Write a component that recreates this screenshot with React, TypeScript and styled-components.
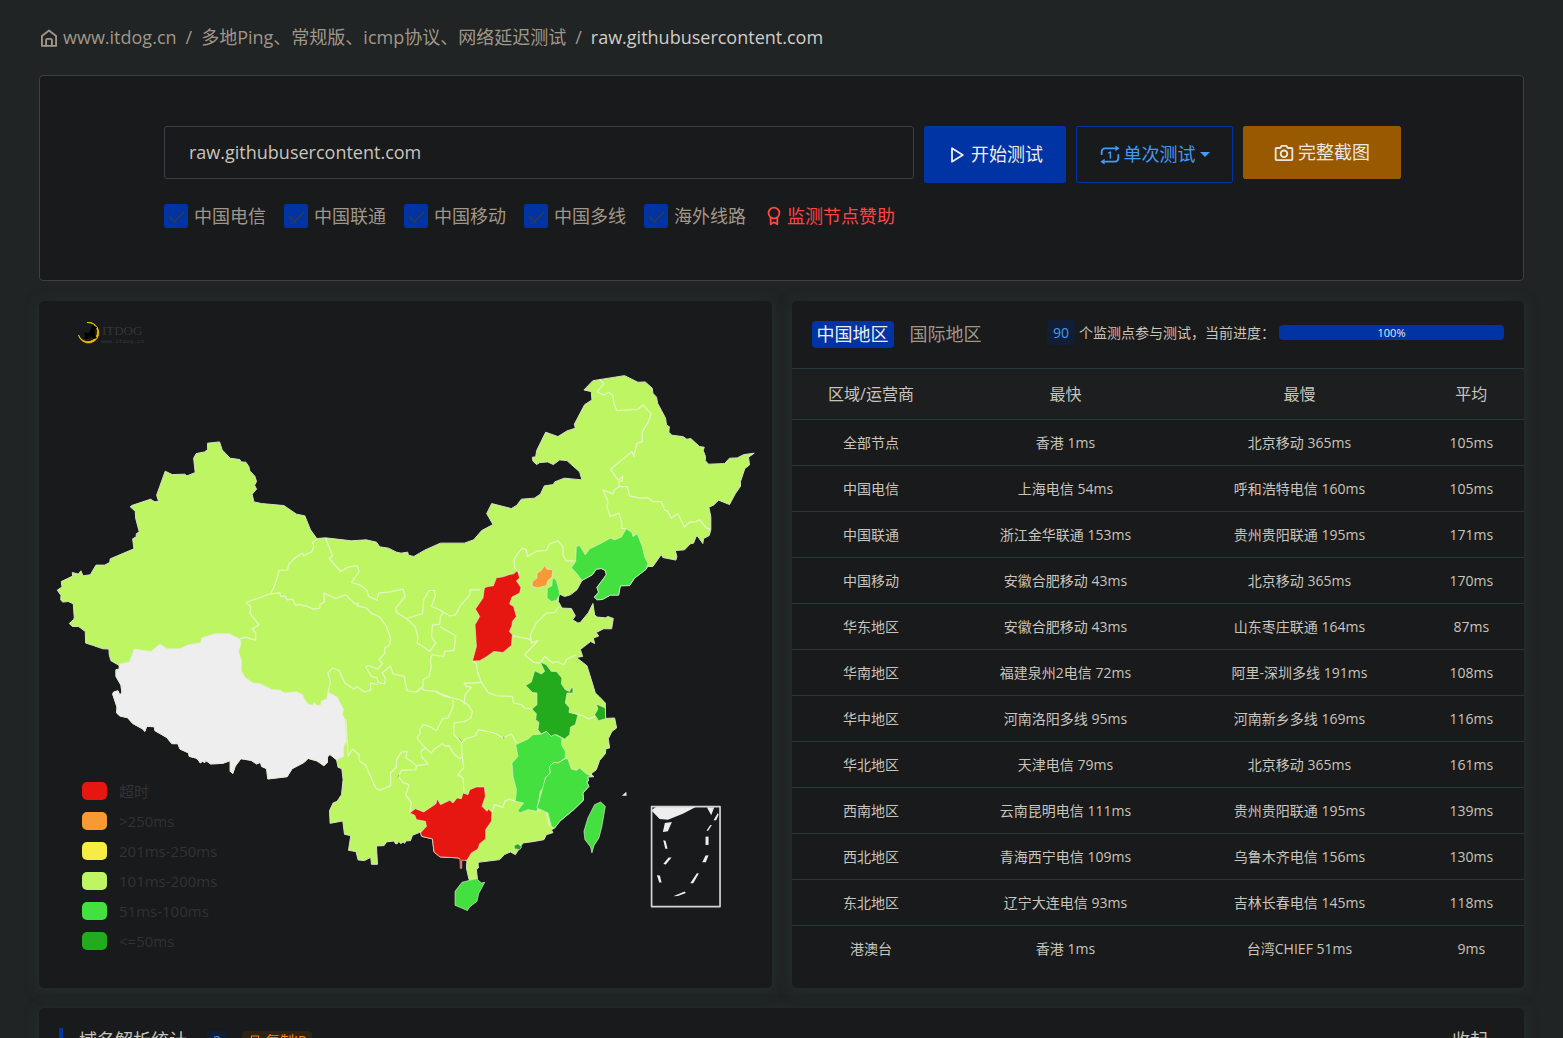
import React from 'react';
import styled, { createGlobalStyle, css } from 'styled-components';

const sans = `"Open Sans", "Noto Sans CJK SC", sans-serif`;

const c = {
  page: '#202424',
  card: '#191a1b',
  line: '#3b4043',
  rule: '#283640',
  text: '#c9c4bc',
  muted: '#a0978a',
  blue: '#0033a3',
  sky: '#429bf5',
  amber: '#985900',
  red: '#ff4545',
};

const level = {
  timeout: '#e61610',
  slow: '#f79a36',
  medium: '#f6ec45',
  fair: '#bef663',
  good: '#43e040',
  best: '#23aa1d',
  none: '#eeeeee',
};

const Global = createGlobalStyle`
  * { box-sizing: border-box; }
  body { margin: 0; background: ${c.page}; color: ${c.text}; font-family: ${sans}; font-size: 14px; overflow: hidden; }
  button, input { font-family: inherit; }
`;

const Page = styled.div`
  height: 100vh;
  padding: 0 39px;
  overflow: hidden;
`;

const Crumbs = styled.nav`
  display: flex;
  align-items: center;
  gap: 9px;
  height: 75px;
  font-size: 18px;
  line-height: 27px;
  color: ${c.muted};
`;

const CrumbLink = styled.a`
  display: inline-flex;
  align-items: center;
  gap: 4px;
  color: inherit;
  text-decoration: none;
`;

const CurrentCrumb = styled.span`
  color: #d1cdc7;
`;

const Icon = styled.svg<{ $size?: number }>`
  flex: none;
  width: ${(p) => p.$size ?? 20}px;
  height: ${(p) => p.$size ?? 20}px;
  fill: none;
  stroke: currentColor;
  stroke-width: 2.2;
  stroke-linejoin: round;
  stroke-linecap: round;
`;

const SearchCard = styled.section`
  height: 206px;
  padding: 50px 122px 0 124px;
  border: 1px solid ${c.line};
  border-radius: 4px;
  background: ${c.card};
`;

const SearchRow = styled.form`
  display: flex;
  align-items: flex-start;
  gap: 10px;
`;

const HostInput = styled.input`
  flex: 1;
  min-width: 0;
  height: 53px;
  padding: 0 24px 2px;
  border: 1px solid ${c.line};
  border-radius: 3px;
  background: transparent;
  color: ${c.text};
  font-size: 18px;
  outline: none;
`;

const Action = styled.button<{ $kind: 'solid' | 'outline' | 'amber' }>`
  display: flex;
  align-items: center;
  justify-content: center;
  gap: 4px;
  height: 57px;
  padding: 0;
  border: 1px solid ${c.blue};
  border-radius: 2px;
  font-size: 18px;
  line-height: 27px;
  white-space: nowrap;
  ${(p) =>
    p.$kind === 'solid'
      ? css`width: 142px; background: ${c.blue}; color: #f0ece6;`
      : p.$kind === 'outline'
        ? css`width: 157px; background: transparent; color: ${c.sky};`
        : css`width: 158px; height: 53px; border-color: ${c.amber}; background: ${c.amber}; color: #e8e6e3;`}
`;

const Caret = styled.span`
  border: 5px solid transparent;
  border-top-color: currentColor;
  border-bottom-width: 0;
`;

const LineRow = styled.div`
  display: flex;
  align-items: center;
  gap: 18px;
  margin-top: 20px;
  font-size: 18px;
  line-height: 26px;
  color: ${c.muted};
`;

const LineLabel = styled.label`
  display: flex;
  align-items: center;
  gap: 6px;
`;

const Tick = styled.input`
  appearance: none;
  width: 24px;
  height: 24px;
  margin: 0;
  border-radius: 2px;
  background: ${c.blue};
  display: grid;
  place-items: center;
  &:checked::before {
    content: '';
    width: 7px;
    height: 13px;
    margin-bottom: 4px;
    border: solid #2b3a55;
    border-width: 0 2px 2px 0;
    transform: rotate(43deg);
  }
`;

const SponsorLink = styled.a`
  display: flex;
  align-items: center;
  gap: 3px;
  color: ${c.red};
  text-decoration: none;
`;

const Columns = styled.div`
  display: grid;
  grid-template-columns: 1fr 1fr;
  gap: 20px;
  margin: 20px 0;
`;

const Panel = styled.section`
  position: relative;
  border-radius: 5px;
  background: ${c.card};
  box-shadow: 0 2px 14px rgba(42, 56, 54, 0.6);
`;

const MapSvg = styled.svg`
  display: block;
  width: 100%;
  height: auto;
  stroke-linejoin: round;
`;

const Legend = styled.ul`
  position: absolute;
  left: 43px;
  bottom: 32px;
  margin: 0;
  padding: 0;
  list-style: none;
  color: #313334;
  font-size: 15px;
  line-height: 30px;
`;

const LegendItem = styled.li`
  display: flex;
  align-items: center;
  gap: 12px;
`;

const Swatch = styled.span<{ $color: string }>`
  width: 25px;
  height: 18px;
  border-radius: 5px;
  background: ${(p) => p.$color};
`;

const ResultHead = styled.header`
  display: flex;
  align-items: flex-start;
  height: 67px;
  padding: 18px 20px 0;
`;

const Tab = styled.button<{ $active?: boolean }>`
  height: 27px;
  margin: 2px 11px 0 0;
  padding: 0 5px;
  border: 0;
  border-radius: 4px;
  background: ${(p) => (p.$active ? c.blue : 'transparent')};
  color: ${(p) => (p.$active ? '#f0ece6' : c.muted)};
  font-size: 18px;
  line-height: 27px;
`;

const Progress = styled.div`
  display: flex;
  align-items: center;
  gap: 4px;
  height: 26px;
  margin-left: auto;
  white-space: nowrap;
`;

const Count = styled.span`
  padding: 0 6px;
  border-radius: 4px;
  background: #121e35;
  color: ${c.sky};
  font-size: 14px;
  line-height: 25px;
`;

const Bar = styled.div`
  width: 225px;
  height: 15px;
  border-radius: 4px;
  background: ${c.blue};
  color: #f0ece6;
  font-size: 11px;
  line-height: 15px;
  text-align: center;
`;

const Results = styled.table`
  width: 100%;
  table-layout: fixed;
  border-collapse: collapse;
  text-align: center;
  th {
    height: 51px;
    padding: 0 0 2px;
    border-top: 1px solid ${c.rule};
    background: #1c1e1f;
    font-size: 16px;
    font-weight: 400;
  }
  td {
    height: 46px;
    padding: 0;
    border-top: 1px solid ${c.rule};
    line-height: 20px;
    white-space: nowrap;
  }
`;

const Col = styled.col<{ $width: string }>`
  width: ${(p) => p.$width};
`;

const DnsPanel = styled(Panel)`
  display: flex;
  align-items: flex-start;
  height: 120px;
  padding: 20px;
`;

const DnsTitle = styled.h2`
  margin: 0 20px 0 0;
  padding-left: 16px;
  border-left: 4px solid ${c.blue};
  font-size: 18px;
  font-weight: 400;
  line-height: 24px;
`;

const DnsBadge = styled.span`
  margin: 3px 15px 0 0;
  padding: 0 6px;
  border-radius: 4px;
  background: #121e35;
  color: ${c.sky};
  line-height: 20px;
`;

const CopyButton = styled.button`
  display: flex;
  align-items: center;
  gap: 6px;
  height: 20px;
  margin-top: 3px;
  padding: 0 6px;
  border: 0;
  border-radius: 4px;
  background: #2e2315;
  color: #f08c14;
  font-size: 14px;
  line-height: 20px;
`;

const FoldButton = styled.button`
  display: flex;
  align-items: center;
  gap: 4px;
  margin: 0 4px 0 auto;
  padding: 0;
  border: 0;
  background: none;
  color: ${c.text};
  font-size: 18px;
  line-height: 24px;
`;

/* The map is digitised in tiles, three units to one map unit. */
type Point = [number, number];
const tile = (ox: number, oy: number) => (s: string): Point[] =>
  s.trim().split(/\s+/).map((p) => {
    const [x, y] = p.split(',').map(Number);
    return [ox + x / 3, oy + y / 3];
  });
const nw = tile(1, -1);
const ne = tile(361, 59);
const sw = tile(1, 319);
const se = tile(361, 339);
const mid = tile(201, 229);
const south = tile(281, 379);
const path = (pts: Point[]) => 'M' + pts.map(([x, y]) => `${x.toFixed(1)} ${y.toFixed(1)}`).join('L');

const tibetSouth = sw(`870,404 863,412 863,428 852,438 832,424 805,416 793,428 757,447 742,471 684,478 680,447 665,440 662,428 650,433 634,422 603,417 586,440 579,461 571,455 571,423 548,431 512,433 497,422 494,430 489,424 481,430 475,420 467,415 448,410 446,400 420,388 414,372 396,372 380,353 345,333 343,321 320,320 315,335 307,327 278,311 263,294 240,289 230,280 231,262 218,223 221,217 234,213 239,225 246,220 243,196 228,170 228,150 238,148 238,137`);
const tibet = [
  ...sw(`238,133 268,127 283,88 333,95 360,73 382,87 420,87 445,75 482,69 485,55 525,42 567,41 600,58 604,72 596,95 605,125 604,152 616,173 640,190 660,191 695,209 720,211 735,220 770,216 788,225 795,240 808,255 820,256 822,247 832,258 843,255 845,243 861,238 864,217 892,232 912,270 908,283 915,298 920,365 912,380 912,410 890,420`),
  ...tibetSouth,
];

const liaoningCoast = `740,628 705,655 690,677 662,678 657,706 632,706 608,719 592,720 584,712 597,697 592,683 620,645 617,632 605,626 590,628 578,645 547,662`;

const mainland = [
  ...nw(`52,871 66,862 64,845 98,829 97,818 115,823 123,813 129,828 151,825 168,796 194,796 209,788 211,777 282,747 278,717 289,711 289,702 298,696 287,655 286,634 271,621 275,617 332,598 343,605 356,605 350,586 376,514 397,524 435,523 441,528 466,518 461,475 469,461 494,456 503,449 503,430 539,426 547,450 571,475 600,479 604,486 618,487 627,500 630,513 645,529 650,545 644,556 650,568 637,583 642,606 665,611 732,617 770,643 795,648 812,690 831,716 857,714 935,723 979,720 1010,727 1020,741 1046,745 1070,757 1084,760 1104,757 1106,766`),
  ...ne(`42,590 75,571 122,550 194,550 222,540 246,512 280,494 261,461 276,431 335,446 352,436 365,418 404,415 422,403 434,378 461,374 465,366 494,355 516,357 547,360 540,336 502,302 480,300 461,314 444,306 420,308 411,314 400,304 398,292 408,291 411,272 438,217 475,230 502,213 527,205 524,193 555,134 577,120 575,95 553,90 580,62 675,47 715,67 737,66 758,85 760,100 771,112 774,130 786,152 798,175 801,196 809,200 808,217 817,226 850,230 862,238 874,236 900,260 914,262 911,272 918,290 917,302 927,313 975,311 990,295 1013,294 1033,284 1064,280 1047,292 1050,315 1036,326 1023,365 1023,379 1007,402 990,434 957,421 942,436 928,442 934,470 934,510 929,527 912,536 910,551 893,528 889,532 882,550 872,552 855,570 827,572 832,590 829,601 790,593 785,584 760,620 744,620 ${liaoningCoast} 532,690 512,705 495,710 478,702 476,725 487,745 515,746 527,768 519,780 535,790 542,788 566,759 580,731 585,765 592,772 618,774 625,770 641,776 636,807 612,807 590,818 597,829 581,835 585,851 573,845 542,869 549,890 530,893 562,918 575,960 587,1000`),
  ...se(`600,172 617,190 618,236 645,235 651,265 637,275 626,297 630,325 619,327 617,342 600,362 590,390 574,403 583,411 564,412 567,423 561,426 568,440 550,460 551,482 520,512 480,545 464,566 455,570 460,579 440,585 433,600 400,606 370,610 347,645 332,637 314,645 300,660 235,668 236,685 230,690 233,718 208,720 200,685 202,662 175,655 145,653 121,652 103,637 98,598 66,590 62,580`),
  ...south(`300,458 278,467 272,483 258,484 255,491 250,487 243,492 237,485 232,493 226,491 224,484 200,487 193,498 170,499 173,554 155,554 153,533 134,543 115,541 109,516 86,512 93,468 74,464 69,424 31,431 29,393 40,370 52,365 65,345 70,300 66,267 55,263 50,240`),
  ...tibetSouth,
  ...sw(`213,123 208,106 207,88 188,87 160,77 137,70 136,35 120,23 115,20 97,20 88,11`),
  ...nw(`100,960 103,955 100,912 85,905 68,907 62,900 63,887`),
];

const provinces: { name: string; color: string; pts: Point[] }[] = [
  { name: 'tibet', color: level.none, pts: tibet },
  { name: 'shanxi', color: level.timeout, pts: ne(`353,632 342,642 330,644 310,651 290,654 281,678 265,680 254,684 250,715 227,748 240,770 226,795 230,860 218,904 240,903 262,890 282,875 310,878 335,857 338,825 329,815 337,798 338,785 350,770 342,740 330,733 337,712 360,700 364,683 350,663 360,655`) },
  { name: 'liaoning', color: level.good, pts: ne(`515,624 528,605 530,560 540,557 557,585 570,567 605,550 632,535 645,540 665,532 680,507 697,518 700,530 713,522 728,560 735,590 745,610 ${liaoningCoast} 530,640`) },
  { name: 'beijing', color: level.slow, pts: ne(`397,680 398,665 412,655 412,640 425,632 435,617 442,628 460,630 457,652 445,662 440,678 415,684`) },
  { name: 'tianjin', color: level.good, pts: ne(`442,715 443,685 457,678 458,658 463,655 470,662 478,690 480,705 470,722 455,725`) },
  { name: 'anhui', color: level.best, pts: se(`422,67 440,75 455,95 470,95 487,115 485,132 497,150 510,155 514,145 520,145 520,160 502,160 497,190 510,205 508,218 535,225 527,255 513,262 510,285 495,298 470,285 455,290 440,275 425,283 415,270 418,248 408,240 410,222 397,208 412,195 412,160 398,158 378,137 395,127 405,93 425,103 435,95`) },
  { name: 'jiangxi', color: level.good, pts: se(`440,275 455,290 465,284 487,295 485,315 497,335 497,355 475,370 463,368 450,380 452,400 437,415 435,440 422,455 412,515 385,510 360,520 355,512 372,490 347,485 350,450 340,410 337,370 355,350 348,315 385,298 400,285 425,283`) },
  { name: 'fujian', color: level.good, pts: se(`505,358 515,388 530,392 540,385 560,402 577,410 564,412 567,423 561,426 568,440 550,460 551,482 520,512 480,545 464,566 455,560 445,520 412,505 425,460 437,415 452,400 450,380 463,368 475,370 497,357`) },
  { name: 'shanghai', color: level.best, pts: se(`590,193 617,205 618,237 597,243 585,225 595,208`) },
  { name: 'guangxi', color: level.timeout, pts: se(`30,520 47,507 72,517 108,493 113,478 122,495 150,482 160,490 172,475 185,477 190,460 205,465 210,450 230,442 254,442 257,470 247,500 262,515 266,508 277,518 275,545 258,570 258,598 240,612 235,628 215,640 202,662 186,662 186,686 182,686 181,658 175,655 145,653 121,652 103,637 98,598 66,590 62,580 80,560 77,545 50,540 45,527`) },
  { name: 'hongkong', color: level.best, pts: se(`343,618 355,612 366,622 360,630 345,628`) },
  { name: 'hainan', color: level.good, pts: se(`166,755 187,728 230,717 245,730 255,728 237,762 232,785 210,802 203,813 166,797`) },
  { name: 'taiwan', color: level.good, pts: se(`585,495 603,487 617,500 607,560 598,595 583,618 577,640 573,622 556,600 553,575 565,535`) },
];

const borders: Point[][] = [
  mid(`232,28 218,37 222,50 216,66 192,78 188,70 165,85 147,103 143,120 118,122 107,160 93,192 18,218 33,230 30,250 57,285 37,298 48,310 47,331 15,322 0,328`),
  mid(`93,192 120,189 123,200 135,199 142,210 158,208 167,226 178,224 200,229 222,238 240,235 240,224 254,216 252,190 287,206 318,195 345,222 356,220 352,228 378,234 395,250 420,262 440,290 452,325 450,345 435,355 435,370 418,390 428,402 414,418 385,407 378,412 395,440 412,445 415,458 434,463 437,445 427,430 452,409 460,432 493,440 502,483 530,487 545,475 555,482 590,485 615,500 635,505`),
  mid(`265,488 272,455 264,430 278,415 298,422 315,460 343,478 350,470 375,487 393,482 392,460 414,465`),
  mid(`258,26 278,78 268,86 303,125 325,112 352,107 358,125 335,158 360,165 380,180 387,200 412,211 416,190 450,186 490,178 496,200 468,235 470,248 500,266 548,252 552,210 568,182 584,182 587,198 575,230 600,240 612,248 630,258 648,255 660,230 690,195 692,180 720,180`),
  mid(`500,266 527,292 535,325 532,340 552,352 570,365 588,340 575,320 578,285 600,283 602,260 612,248`),
  mid(`600,290 648,318 643,362 615,365 612,380 575,375 572,395 575,410 568,440 550,450 550,470 530,487`),
  [...ne(`218,904 230,912 233,935 245,968 265,998 290,1008`), ...se(`338,170 342,190 365,195 375,205 397,208`)],
  se(`245,128 220,130 193,130 200,140 215,142 196,165 193,195`),
  se(`110,158 150,172 180,180 205,195 218,215 213,235 195,245 163,250 162,285 185,308 187,345 192,385 175,405 190,415 193,455`),
  south(`400,60 400,80 385,115 368,117 350,153 330,140 310,135 300,150 302,160 292,175 310,198 322,210 335,220 345,207 368,192 378,200 388,197 402,222 420,237 427,232`),
  south(`320,205 305,212 305,230 325,253 290,258 288,270 245,272 236,290 250,308 268,315 258,345 275,370 270,400`),
  south(`78,118 85,230 98,208 118,225 120,245 137,255 150,285 168,325 180,332 213,318 212,280 230,262 230,240 245,217 262,215 258,235 275,245 288,258`),
  south(`427,190 435,178 468,168 475,150 525,160 550,175 575,163 590,190`),
  south(`518,395 525,375 550,383 555,365 568,358 588,365`),
  south(`650,395 665,387 680,395 690,440`),
  ne(`360,640 345,625 343,600 355,580 368,565 380,570 383,590 415,573 440,572 450,552 475,543 490,560 490,585 500,603 525,603`),
  ne(`338,828 390,838 400,850`),
  ne(`478,740 465,758 440,760 410,790 392,825 395,850 415,842 375,885 403,908 422,910 435,890 460,910 470,905 493,915 500,900 528,885`),
  se(`527,222 550,228 568,238 590,228`),
  ne(`600,58 613,72 592,95 612,105 628,97 640,107 643,130 652,152 715,148 730,135 755,162 745,188 728,215 728,245 712,250 703,290 697,275 633,328 655,360 670,350 668,362 658,365 658,380 645,390 640,402 610,390 625,425 622,440 632,470 658,460 667,490 665,505 680,507`),
  ne(`658,380 683,380 690,408 720,415 745,413 760,425 785,425 795,450 805,455 815,475 835,462 855,502 870,487 890,485 900,480 920,505 932,508`),
];

const islets = [
  se('755,512 770,501 890,501 850,522 805,540 780,538'),
  se('922,503 944,503 935,527'),
  se('942,542 955,520 957,525 950,542'),
  se('790,577 796,550 817,547 805,575'),
  se('921,573 932,556 937,556 926,573'),
  se('918,591 927,591 927,616 918,616'),
  se('908,668 918,648 927,647 919,668'),
  se('872,731 892,701 898,702 881,731'),
  se('821,770 855,756 859,760 835,769'),
  se('791,602 798,603 804,627 797,627'),
  se('791,673 807,654 816,654 799,675'),
  se('772,707 781,708 786,729 779,729'),
  se('667,468 680,456 681,468'),
];

const legend = [
  ['超时', level.timeout],
  ['>250ms', level.slow],
  ['201ms-250ms', level.medium],
  ['101ms-200ms', level.fair],
  ['51ms-100ms', level.good],
  ['<=50ms', level.best],
];

const rows = [
  ['全部节点', '香港 1ms', '北京移动 365ms', '105ms'],
  ['中国电信', '上海电信 54ms', '呼和浩特电信 160ms', '105ms'],
  ['中国联通', '浙江金华联通 153ms', '贵州贵阳联通 195ms', '171ms'],
  ['中国移动', '安徽合肥移动 43ms', '北京移动 365ms', '170ms'],
  ['华东地区', '安徽合肥移动 43ms', '山东枣庄联通 164ms', '87ms'],
  ['华南地区', '福建泉州2电信 72ms', '阿里-深圳多线 191ms', '108ms'],
  ['华中地区', '河南洛阳多线 95ms', '河南新乡多线 169ms', '116ms'],
  ['华北地区', '天津电信 79ms', '北京移动 365ms', '161ms'],
  ['西南地区', '云南昆明电信 111ms', '贵州贵阳联通 195ms', '139ms'],
  ['西北地区', '青海西宁电信 109ms', '乌鲁木齐电信 156ms', '130ms'],
  ['东北地区', '辽宁大连电信 93ms', '吉林长春电信 145ms', '118ms'],
  ['港澳台', '香港 1ms', '台湾CHIEF 51ms', '9ms'],
];

function ChinaMap() {
  return (
    <MapSvg viewBox="0 0 733 687" role="img" aria-label="中国地区延迟地图">
      <path d="M48 21.500A10.300 10.300 0 1 1 39.500 34A9.800 9.800 0 0 0 58.500 29.500A10 10 0 0 0 48 21.500Z" fill="#f5c400" stroke="#f5c400" strokeWidth="0.800" />
      <path d="M45 31.500l5 .5 3-7 1-2 1.500 2 2.500 1-1 2-1.500 1 .5 5 2 3-3 1-2-2-4 1-1 1h-3l1-3z" fill="#000" />
      <text x="63" y="34" fontSize="13" fontFamily="Liberation Serif, serif" fill="#34373a">ITDOG</text>
      <text x="62" y="42" fontSize="6" fontFamily="Liberation Mono, monospace" fill="#34373a">www.itdog.cn</text>
      <path d={path(mainland) + 'Z'} fill={level.fair} stroke="#d8dfc8" strokeWidth="1" />
      {borders.map((b, i) => (
        <path key={i} d={path(b)} fill="none" stroke="#e6f5c8" strokeWidth="1.2" />
      ))}
      {provinces.map((p) => (
        <path key={p.name} d={path(p.pts) + 'Z'} fill={p.color} stroke="#e4ecd8" strokeOpacity="0.8" strokeWidth="0.8" />
      ))}
      <path d="M420 437l3 4M465 436v2M360 474l-1 3" stroke="#9aa88a" strokeWidth="1" />
      {islets.map((s, i) => (
        <path key={i} d={path(s) + 'Z'} fill="#eee" />
      ))}
      <rect x="613" y="506" width="68.500" height="100" fill="none" stroke="#d4d5d6" strokeWidth="1.700" />
    </MapSvg>
  );
}

export default function App() {
  return (
    <>
      <Global />
      <Page>
        <Crumbs>
          <CrumbLink href="#home">
            <Icon viewBox="0 0 24 24"><path d="M3.500 9.500 12 3l8.500 6.500V21.500h-17Z" /><path d="M8.500 21v-6.500a1.500 1.500 0 0 1 1.500-1.500h4a1.500 1.500 0 0 1 1.500 1.500V21" /></Icon>
            www.itdog.cn
          </CrumbLink>
          <span>/</span>
          <CrumbLink href="#ping">多地Ping、常规版、icmp协议、网络延迟测试</CrumbLink>
          <span>/</span>
          <CurrentCrumb>raw.githubusercontent.com</CurrentCrumb>
        </Crumbs>

        <SearchCard>
          <SearchRow onSubmit={(e) => e.preventDefault()}>
            <HostInput aria-label="域名" defaultValue="raw.githubusercontent.com" />
            <Action $kind="solid" type="submit">
              <Icon viewBox="0 0 24 24"><path d="M6 4v16l13-8Z" /></Icon>
              开始测试
            </Action>
            <Action $kind="outline" type="button">
              <Icon viewBox="0 0 24 24">
                <path d="M2 11V8a4 4 0 0 1 4-4h13M22 12v4a4 4 0 0 1-4 4H5" />
                <path d="M18.500 0.500 23.500 4l-5 3.500ZM5.500 16.500 0.500 20l5 3.500Z" fill="currentColor" strokeWidth="0" />
                <path d="m10.500 9.500 2-1v7" strokeWidth="1.800" />
              </Icon>
              单次测试
              <Caret />
            </Action>
            <Action $kind="amber" type="button">
              <Icon viewBox="0 0 24 24">
                <path d="M3 6h4.500L9 3.500h6L16.500 6H21a1 1 0 0 1 1 1v12.500a1 1 0 0 1-1 1H3a1 1 0 0 1-1-1V7a1 1 0 0 1 1-1Z" />
                <circle cx="12" cy="13" r="4" />
              </Icon>
              完整截图
            </Action>
          </SearchRow>
          <LineRow>
            {['中国电信', '中国联通', '中国移动', '中国多线', '海外线路'].map((n) => (
              <LineLabel key={n}>
                <Tick type="checkbox" defaultChecked />
                {n}
              </LineLabel>
            ))}
            <SponsorLink href="#sponsor">
              <Icon viewBox="0 0 24 24"><circle cx="12" cy="8.500" r="6.500" /><path d="M8 14v8l4-2.500 4 2.500v-8" /></Icon>
              监测节点赞助
            </SponsorLink>
          </LineRow>
        </SearchCard>

        <Columns>
          <Panel>
            <ChinaMap />
            <Legend>
              {legend.map(([label, color]) => (
                <LegendItem key={label}><Swatch $color={color} />{label}</LegendItem>
              ))}
            </Legend>
          </Panel>
          <Panel>
            <ResultHead>
              <Tab $active type="button">中国地区</Tab>
              <Tab type="button">国际地区</Tab>
              <Progress>
                <Count>90</Count>
                <span>个监测点参与测试，当前进度：</span>
                <Bar role="progressbar" aria-valuenow={100}>100%</Bar>
              </Progress>
            </ResultHead>
            <Results>
              <colgroup>
                <Col $width="21.7%" /><Col $width="31.4%" /><Col $width="32.5%" /><Col $width="14.4%" />
              </colgroup>
              <thead>
                <tr><th>区域/运营商</th><th>最快</th><th>最慢</th><th>平均</th></tr>
              </thead>
              <tbody>
                {rows.map((r) => (
                  <tr key={r[0]}>{r.map((v, i) => <td key={i}>{v}</td>)}</tr>
                ))}
              </tbody>
            </Results>
          </Panel>
        </Columns>

        <DnsPanel>
          <DnsTitle>域名解析统计</DnsTitle>
          <DnsBadge>2</DnsBadge>
          <CopyButton type="button">
            <Icon $size={12} viewBox="0 0 24 24"><path d="M7 2h14v15H7ZM7 7H3v15h13v-5" /></Icon>
            复制IP
          </CopyButton>
          <FoldButton type="button">
            收起
            <Icon $size={8} viewBox="0 0 24 24"><path d="m3 17 9-9 9 9" strokeWidth="4" /></Icon>
          </FoldButton>
        </DnsPanel>
      </Page>
    </>
  );
}
